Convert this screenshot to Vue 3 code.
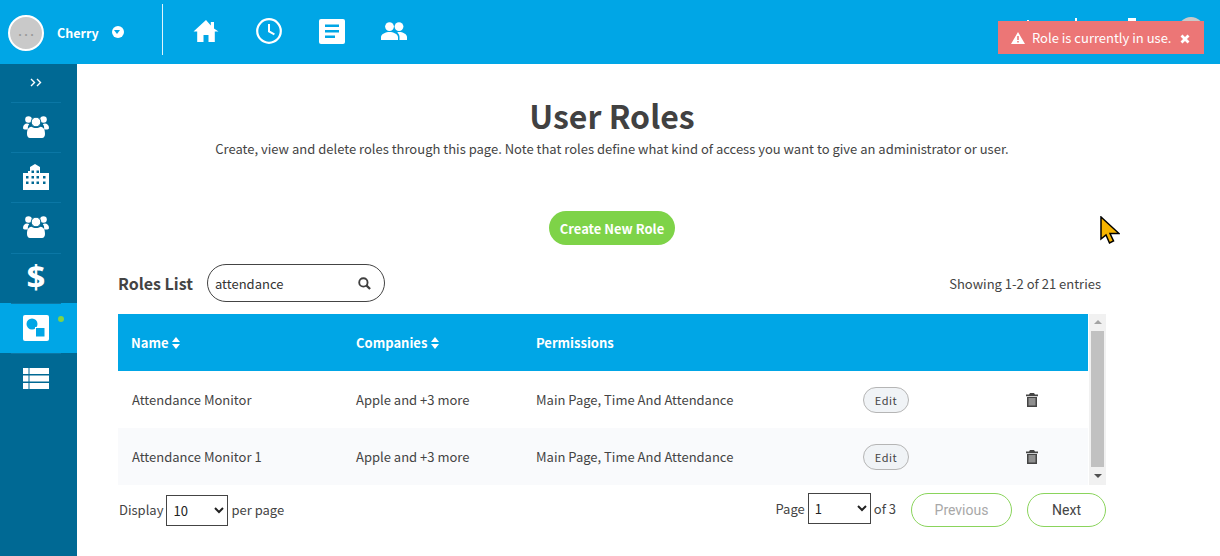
<template>
  <div class="app">
    <header class="topbar">
      <div class="avatar"><span class="avatar-dots">. . .</span></div>
      <span class="username">Cherry</span>
      <span class="caret"></span>
      <div class="divider"></div>
      <nav class="topnav">
        <svg viewBox="0 0 26 24" class="ic-home"><path fill="#fff" d="M13 1 0.5 12.6h3.7V23h6.3v-7h5v7h6.3V12.6h3.7L21 9.5V3h-3.2v3.5z"/></svg>
        <svg viewBox="0 0 26 26" class="ic-clock"><circle cx="13" cy="13" r="11.8" fill="none" stroke="#fff" stroke-width="2.2"/><path d="M13 6v7.4l5.4 3" fill="none" stroke="#fff" stroke-width="2"/></svg>
        <svg viewBox="0 0 26 25" class="ic-note"><rect width="26" height="25" rx="2" fill="#fff"/><path d="M6 5.5h14v2.6H6zM6 11h14v2.6H6zM6 16.5h10v2.6H6z" fill="#00a6e6"/></svg>
        <svg viewBox="0 0 26 18" class="ic-people"><circle cx="8.5" cy="4.6" r="4.4" fill="#fff"/><circle cx="18" cy="4.6" r="4.4" fill="#fff"/><path fill="#fff" d="M0 18v-3c0-3 5-5 8.5-5s8.500 2 8.500 5v3zM18.500 18v-3c0-1.800-.8-3.300-2.200-4.600.6-.2 1.200-.4 1.900-.4 3.300 0 7.800 2 7.800 5v3z"/></svg>
      </nav>
      <div class="top-right">
        <i class="peek p1"></i><i class="peek p2"></i><i class="peek p3"></i><i class="peek-avatar"></i>
      </div>
    </header>

    <div class="body">
      <aside class="sidebar">
        <div class="expand">
          <svg viewBox="0 0 13 9" width="13" height="9"><path d="M1 1l3.500 3.500L1 8M7 1l3.500 3.500L7 8" fill="none" stroke="#fff" stroke-width="1.400"/></svg>
        </div>
        <div v-for="item in sideItems" :key="item.id" class="side-item" :class="{ active: item.active }">
          <svg v-if="item.icon === 'users'" viewBox="0 0 26 24" width="26" height="24">
            <circle cx="5.500" cy="4.500" r="3.300" fill="#fff"/><circle cx="20.500" cy="4.500" r="3.300" fill="#fff"/>
            <path fill="#fff" d="M0 13c0-3 2-4.500 4-4.500 1 0 1.800.4 2.200.8C5 10.500 4.800 12 4.800 14.500 2 14.800 0 14.500 0 13zM26 13c0-3-2-4.500-4-4.500-1 0-1.800.4-2.200.8 1.200 1.200 1.400 2.700 1.400 5.200 2.800.3 4.800 0 4.800-1.500z"/>
            <circle cx="13" cy="7" r="4.800" fill="#fff" stroke="#006994"/>
            <path fill="#fff" d="M4 19c0-4 1-7 4.500-7.300 2.500 1.800 6.500 1.800 9 0C21 12 22 15 22 19c0 2-1 4-3 4H7c-2 0-3-2-3-4z"/>
          </svg>
          <svg v-else-if="item.icon === 'building'" viewBox="0 0 26 26" width="26" height="26">
            <path fill="#fff" fill-rule="evenodd" d="M0 9h5V7h2V3l5-3 5 3v6h-1 1v0h9v17H0zM3 12v2.500h2.500V12zM8.500 12v2.500H11V12zM13.500 12v2.500H16V12zM20 12v2.500h2.500V12zM3 17.500V20h2.500v-2.500zM8.500 17.500V20H11v-2.500zM13.500 17.500V20H16v-2.500zM20 17.500V20h2.500v-2.500zM8.500 6.500V9H11V6.500zM13.500 6.500V9H16V6.500z"/>
          </svg>
          <span v-else-if="item.icon === 'dollar'" class="dollar">$</span>
          <svg v-else-if="item.icon === 'shapes'" viewBox="0 0 26 26" width="26" height="26">
            <rect width="26" height="26" rx="2" fill="#fff"/><circle cx="9" cy="9" r="5.500" fill="#00a6e6"/><rect x="12.500" y="12.500" width="9.500" height="9.500" fill="#00a6e6" stroke="#fff"/>
          </svg>
          <svg v-else viewBox="0 0 26 22" width="26" height="22">
            <path fill="#fff" d="M0 0h5.500v6H0zM6.500 0H26v6H6.500zM0 7.500h5.500v6H0zM6.500 7.500H26v6H6.500zM0 15h5.500v6H0zM6.500 15H26v6H6.500z"/>
          </svg>
          <i v-if="item.active" class="dot"></i>
        </div>
      </aside>

      <main class="main">
        <h1 class="title">User Roles</h1>
        <p class="subtitle">Create, view and delete roles through this page. Note that roles define what kind of access you want to give an administrator or user.</p>
        <div class="create-wrap"><button class="create-btn">Create New Role</button></div>

        <div class="toolbar">
          <h2 class="list-title">Roles List</h2>
          <label class="search">
            <input class="search-input" value="attendance" />
            <svg viewBox="0 0 14 14" width="13" height="13"><circle cx="5.800" cy="5.800" r="4.500" fill="none" stroke="#3f3f3f" stroke-width="2"/><path d="M9 9l4 4" stroke="#3f3f3f" stroke-width="2.400"/></svg>
          </label>
          <span class="entries">Showing 1-2 of 21 entries</span>
        </div>

        <div class="table-wrap">
          <div class="table">
            <div class="row head">
              <div class="name-col">Name <i class="sort"></i></div>
              <div>Companies <i class="sort"></i></div>
              <div>Permissions</div>
            </div>
            <div v-for="(role, i) in roles" :key="role.name" class="row" :class="{ alt: i % 2 === 1 }">
              <div class="name-col cell-name">{{ role.name }}</div>
              <div>{{ role.companies }}</div>
              <div>{{ role.permissions }}</div>
              <div><button class="edit-btn">Edit</button></div>
              <div class="trash-cell">
                <svg viewBox="0 0 12 14" width="12" height="14"><path fill="#444" d="M4 0h4l1 1.500h3v1.700H0V1.500h3zM1 4h10v10H1z"/><path fill="#8f8f8f" d="M2.500 5h7v7.500h-7z"/></svg>
              </div>
            </div>
          </div>
          <div class="scrollbar">
            <i class="arrow up"></i>
            <div class="thumb"></div>
            <i class="arrow down"></i>
          </div>
        </div>

        <div class="pager">
          <div class="pager-left">
            Display
            <select class="select"><option>10</option><option>25</option></select>
            per page
          </div>
          <div class="pager-right">
            <span>Page</span>
            <select class="select page-select"><option>1</option><option>2</option><option>3</option></select>
            <span class="of">of 3</span>
            <button class="page-btn prev">Previous</button>
            <button class="page-btn next">Next</button>
          </div>
        </div>
      </main>
    </div>

    <div class="toast">
      <svg viewBox="0 0 14 12" width="14" height="12"><path fill="#fff" fill-rule="evenodd" d="M7 0l7 12H0zM6.200 4v4h1.600V4zM6.200 9v1.500h1.600V9z"/></svg>
      <span class="toast-text">Role is currently in use.</span>
      <svg class="toast-x" viewBox="0 0 10 10" width="10" height="10"><path d="M1.500 1.500l7 7M8.500 1.500l-7 7" stroke="#fff" stroke-width="2.800"/></svg>
    </div>

    <svg class="cursor" viewBox="0 0 20 29" width="20" height="29">
      <path d="M1 1v22l5-4 3.500 8 4-2-3.500-7.500H19z" fill="#f6b400" stroke="#000" stroke-width="1.500"/>
    </svg>
  </div>
</template>

<script setup>
const sideItems = [
  { id: 1, icon: 'users' },
  { id: 2, icon: 'building' },
  { id: 3, icon: 'users' },
  { id: 4, icon: 'dollar' },
  { id: 5, icon: 'shapes', active: true },
  { id: 6, icon: 'table' }
]

const roles = [
  { name: 'Attendance Monitor', companies: 'Apple and +3 more', permissions: 'Main Page, Time And Attendance' },
  { name: 'Attendance Monitor 1', companies: 'Apple and +3 more', permissions: 'Main Page, Time And Attendance' }
]
</script>

<style>
html, body { margin: 0; background: #fff; }
</style>

<style scoped>
.app {
  position: relative;
  width: 1220px;
  height: 556px;
  overflow: hidden;
  font-family: "Noto Sans CJK SC", "Noto Sans", sans-serif;
  font-size: 13px;
  color: #444;
}
.topbar {
  height: 64px;
  background: #00a6e6;
  display: flex;
  align-items: center;
  padding-left: 8px;
  box-sizing: border-box;
}
.avatar {
  width: 36px;
  height: 36px;
  box-sizing: border-box;
  border: 2px solid #fff;
  border-radius: 50%;
  background: #c9c9c9;
  margin-top: 2px;
  text-align: center;
  line-height: 28px;
  color: #999;
  font-size: 11px;
  font-weight: 700;
}
.username { margin-left: 13px; color: #fff; font-weight: 700; font-size: 12.500px; }
.caret {
  position: relative;
  width: 12px;
  height: 12px;
  border-radius: 50%;
  background: #fff;
  margin-left: 13px;
}
.caret::after {
  content: "";
  position: absolute;
  left: 2.500px;
  top: 4px;
  border: 3.500px solid transparent;
  border-top: 4px solid #00a6e6;
  border-bottom: 0;
}
.divider { width: 1px; height: 51px; background: #dff4fc; margin: -5px 0 0 38px; }
.topnav { display: flex; align-items: center; margin: -2px 0 0 30px; }
.ic-home { width: 26px; height: 24px; }
.ic-clock { width: 26px; height: 26px; margin-left: 37px; }
.ic-note { width: 26px; height: 25px; margin-left: 37px; }
.ic-people { width: 26px; height: 18px; margin-left: 36px; }
.top-right { margin-left: auto; position: relative; width: 200px; height: 64px; }
.peek { position: absolute; top: 19px; background: #fff; }
.p1 { left: 7px; width: 2px; height: 10px; top: 20px; }
.p2 { left: 55px; width: 2px; height: 10px; top: 18px; }
.p3 { left: 108px; width: 8px; height: 10px; top: 18px; }
.peek-avatar { position: absolute; left: 158px; top: 17px; width: 26px; height: 26px; border-radius: 50%; background: #c9c9c9; }

.body { display: flex; height: 492px; }
.sidebar { width: 77px; background: #006994; flex-shrink: 0; }
.expand { height: 37.500px; display: flex; align-items: center; justify-content: center; padding-right: 5px; box-sizing: border-box; }
.side-item {
  position: relative;
  height: 50.400px;
  display: flex;
  align-items: center;
  justify-content: center;
  padding-right: 5px;
  box-sizing: border-box;
}
.side-item::before {
  content: "";
  position: absolute;
  left: 11px;
  top: 0;
  width: 50px;
  height: 1px;
  background: #0b77a5;
}
.side-item.active { background: #00a6e6; }
.dollar { color: #fff; font-size: 33px; font-weight: 700; line-height: 1; font-family: "Noto Sans", sans-serif; margin-top: -2px; }
.dot { position: absolute; left: 58px; top: 13px; width: 6px; height: 6px; border-radius: 50%; background: #7ed348; }

.main { width: 988px; padding: 31px 114px 0 41px; flex-shrink: 0; box-sizing: content-box; }
.title { margin: 0; text-align: center; font-size: 32px; line-height: 40px; font-weight: 700; color: #414141; }
.subtitle { margin: 4px 0 0; text-align: center; font-size: 13px; line-height: 20px; color: #444; }
.create-wrap { margin-top: 52px; display: flex; justify-content: center; }
.create-btn {
  width: 126px;
  height: 34px;
  border: 0;
  border-radius: 17px;
  background: #7ed348;
  color: #fff;
  font: 600 13px "Noto Sans CJK SC", "Noto Sans", sans-serif;
}
.toolbar { display: flex; align-items: center; margin-top: 19px; height: 38px; }
.list-title { margin: 0; width: 89px; font-size: 16px; font-weight: 600; color: #444; }
.search {
  width: 178px;
  height: 38px;
  box-sizing: border-box;
  border: 1px solid #444;
  border-radius: 19px;
  display: flex;
  align-items: center;
  padding: 0 13px 0 7px;
}
.search-input { border: 0; outline: 0; flex: 1; min-width: 0; padding: 0; font: 13px "Noto Sans CJK SC", "Noto Sans", sans-serif; color: #333; background: transparent; }
.entries { margin-left: auto; margin-right: 5px; font-size: 13px; }

.table-wrap { display: flex; margin-top: 12px; }
.table { width: 970px; }
.row { display: grid; grid-template-columns: 238px 180px 327px 120px 105px; height: 57px; align-items: center; }
.row.alt { background: #f9fafc; }
.row.head { background: #00a6e6; color: #fff; font-weight: 700; font-size: 13px; }
.name-col { padding-left: 13px; }
.cell-name { padding-left: 14px; }
.sort { display: inline-block; position: relative; width: 9px; height: 12px; vertical-align: -1px; margin-left: 1px; }
.sort::before, .sort::after { content: ""; position: absolute; left: 0; border: 4.500px solid transparent; }
.sort::before { top: 0; border-bottom: 5px solid #fff; border-top: 0; }
.sort::after { bottom: 0; border-top: 5px solid #fff; border-bottom: 0; }
.edit-btn {
  display: block;
  width: 46px;
  height: 26px;
  box-sizing: border-box;
  border: 1px solid #b5b5b5;
  border-radius: 13px;
  background: #f0f3f6;
  color: #444;
  font: 11px "Noto Sans CJK SC", "Noto Sans", sans-serif;
  letter-spacing: .5px;
  padding: 0;
}
.trash-cell { display: flex; padding-left: 43px; }
.scrollbar { width: 17px; margin-left: 1px; background: #f1f1f1; display: flex; flex-direction: column; align-items: center; }
.thumb { width: 13px; height: 136px; background: #c1c1c1; }
.arrow { display: block; width: 0; height: 0; border: 4px solid transparent; }
.arrow.up { border-bottom: 4px solid #a3a3a3; border-top: 0; margin: 6px 0 7px; }
.arrow.down { border-top: 4px solid #505050; border-bottom: 0; margin: 7px 0 6px; }

.pager { display: flex; justify-content: space-between; align-items: center; margin-top: 7px; height: 35px; }
.pager-left { display: flex; align-items: center; gap: 3px; padding-left: 1px; }
.pager-right { display: flex; align-items: center; }
.select {
  width: 62px;
  height: 31px;
  background: #fff;
  border: 1px solid #444;
  border-radius: 0;
  font: 13px "Noto Sans CJK SC", "Noto Sans", sans-serif;
  color: #222;
  padding: 0 0 0 2px;
  outline: 0;
  margin-top: 2px;
}
.page-select { width: 63px; margin: -2px 3px 0 3px; }
.pager-right span { margin-top: -2px; }
.of { margin-right: 15px; }
.page-btn {
  height: 34px;
  box-sizing: border-box;
  border: 1px solid #8ad45c;
  border-radius: 17px;
  background: #fff;
  font: 14px Roboto, sans-serif;
  padding: 0;
}
.prev { width: 101px; color: #a8a8a8; }
.next { width: 79px; margin-left: 15px; color: #444; }

.toast {
  position: absolute;
  left: 998px;
  top: 21px;
  width: 206px;
  height: 33px;
  background: #ec7676;
  color: #fff;
  display: flex;
  align-items: center;
  padding-left: 13px;
  box-sizing: border-box;
}
.toast-text { margin-left: 7px; font-size: 13px; }
.toast-x { position: absolute; left: 182px; top: 13px; }
.cursor { position: absolute; left: 1100px; top: 216px; }
</style>
